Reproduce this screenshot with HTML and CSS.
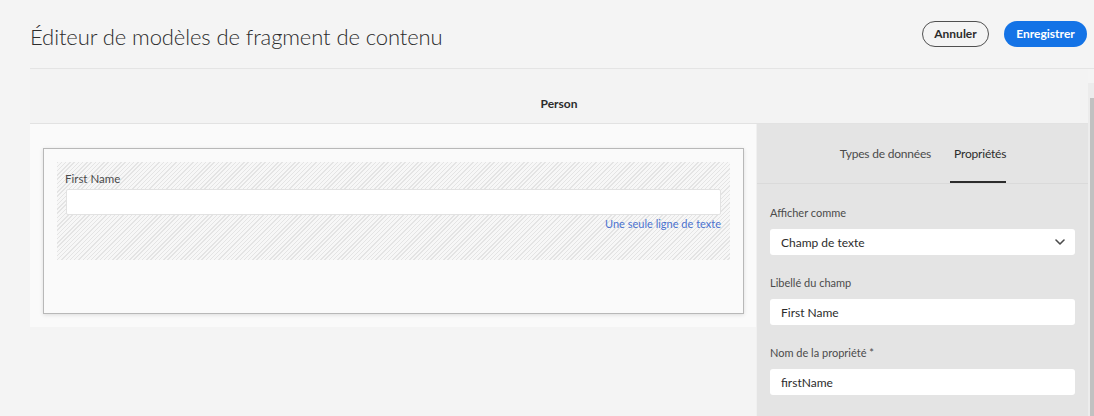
FILE: index.html
```html
<!DOCTYPE html>
<html lang="fr">
<head>
<meta charset="utf-8">
<title>Éditeur de modèles de fragment de contenu</title>
<link rel="stylesheet" href="styles.css">
</head>
<body>
<header class="topbar">
  <h1 class="title">Éditeur de modèles de fragment de contenu</h1>
  <div class="actions">
    <button class="btn btn-secondary">Annuler</button>
    <button class="btn btn-primary">Enregistrer</button>
  </div>
</header>
<div class="main">
  <div class="content">
    <div class="modelbar">Person</div>
    <div class="workspace">
      <section class="canvas">
        <div class="card">
          <div class="field-preview">
            <div class="fp-label">First Name</div>
            <div class="fp-input"></div>
            <div class="fp-hint">Une seule ligne de texte</div>
          </div>
        </div>
      </section>
      <aside class="panel">
        <nav class="tabs">
          <span class="tab">Types de données</span>
          <span class="tab tab-active">Propriétés</span>
        </nav>
        <div class="panel-body">
          <div class="group">
            <label class="group-label">Afficher comme</label>
            <div class="control select">
              <span>Champ de texte</span>
              <svg class="chev" width="10" height="6" viewBox="0 0 10 6"><path d="M1 1 L5 5 L9 1" fill="none" stroke="#4b4b4b" stroke-width="1.6" stroke-linecap="round" stroke-linejoin="round"/></svg>
            </div>
          </div>
          <div class="group">
            <label class="group-label">Libellé du champ</label>
            <div class="control">First Name</div>
          </div>
          <div class="group">
            <label class="group-label">Nom de la propriété *</label>
            <div class="control">firstName</div>
          </div>
        </div>
      </aside>
    </div>
  </div>
  <div class="scrollbar"><div class="sb-arrow"></div><div class="sb-thumb"></div></div>
</div>
</body>
</html>
```
FILE: styles.css
```css
* { box-sizing: border-box; }
html, body { margin: 0; padding: 0; }
body {
  background: #f4f4f4;
  font-family: "Lato", "Open Sans", sans-serif;
  color: #2c2c2c;
  width: 1094px;
  height: 416px;
  overflow: hidden;
}
.topbar {
  margin-left: 30px;
  height: 69px;
  display: flex;
  align-items: center;
  justify-content: space-between;
  padding: 0 7px 0 0;
  border-bottom: 1px solid #e4e4e4;
}
.title {
  margin: 0;
  font-weight: 300;
  font-size: 22px;
  letter-spacing: -0.1px;
  color: #2c2c2c;
  position: relative;
  top: 2px;
}
.actions { display: flex; gap: 15px; align-items: center; padding-bottom: 1px; }
.btn {
  height: 26px;
  border-radius: 14px;
  font-family: "Lato", sans-serif;
  font-weight: 700;
  font-size: 12px;
  padding: 0;
  cursor: pointer;
}
.btn-secondary {
  background: transparent;
  border: 1.5px solid #505050;
  color: #2c2c2c;
  width: 67px;
}
.btn-primary {
  background: #1473e6;
  border: none;
  color: #fff;
  width: 83px;
}
.main {
  display: flex;
  margin-left: 30px;
}
.content { width: 1058px; }
.modelbar {
  height: 55px;
  background: #f3f3f3;
  border-bottom: 1px solid #e2e2e2;
  display: flex;
  align-items: center;
  justify-content: center;
  font-weight: 700;
  font-size: 12px;
  padding-top: 14px;
}
.workspace { display: flex; align-items: flex-start; }
.canvas {
  width: 726px;
  height: 203px;
  background: #fafafa;
  padding: 24px 12px 0 13px;
}
.card {
  width: 701px;
  height: 166px;
  border: 1px solid #b8b8b8;
  background: #fafafa;
  box-shadow: 0 1px 4px rgba(0,0,0,0.12);
  padding: 13px 13px 0 13px;
}
.field-preview {
  height: 98px;
  background-color: #f7f7f7;
  background-image: repeating-linear-gradient(135deg, #e4e4e4 0 1px, transparent 1px 3px);
  padding: 9px 9px 0 8px;
}
.fp-label {
  font-size: 11.5px;
  line-height: 16px;
  color: #4b4b4b;
}
.fp-input {
  margin: 2px 0 0 1px;
  height: 26px;
  background: #fff;
  border: 1px solid #e2e2e2;
  border-radius: 2px;
}
.fp-hint {
  text-align: right;
  font-size: 11px;
  line-height: 18px;
  color: #4b72cf;
}
.panel {
  width: 332px;
  height: 300px;
  background: #e4e4e4;
  border-left: 1px solid #f0f0f0;
}
.tabs {
  height: 60px;
  display: flex;
  justify-content: center;
  align-items: flex-end;
  gap: 18px;
  border-bottom: 1px solid #dadada;
  padding-left: 0;
}
.tab {
  font-size: 12px;
  letter-spacing: -0.2px;
  color: #4b4b4b;
  height: 37px;
  line-height: 16px;
  padding: 0 1px;
  position: relative;
}
.tab-active {
  color: #2c2c2c;
  padding: 0 0 0 4px;
}
.tab-active::after {
  content: "";
  position: absolute;
  left: 0; right: 0; bottom: 0;
  height: 2px;
  background: #2c2c2c;
}
.panel-body { padding: 22px 13px 0 13px; }
.group { margin-bottom: 21px; }
.group-label {
  display: block;
  font-size: 11px;
  line-height: 14px;
  color: #4b4b4b;
  margin-bottom: 9px;
}
.control {
  height: 26px;
  background: #fff;
  border-radius: 3px;
  font-size: 12px;
  color: #2c2c2c;
  display: flex;
  align-items: center;
  padding: 0 11px;
}
.select { justify-content: space-between; padding-right: 10px; }
.chev { display: block; }
.scrollbar {
  width: 6px;
  margin-top: 14px;
  height: 333px;
  background: #ececec;
  display: flex;
  flex-direction: column;
  align-items: flex-end;
}
.sb-arrow { height: 15px; }
.sb-thumb { width: 4px; flex: 1; background: #c1c1c1; }
```
